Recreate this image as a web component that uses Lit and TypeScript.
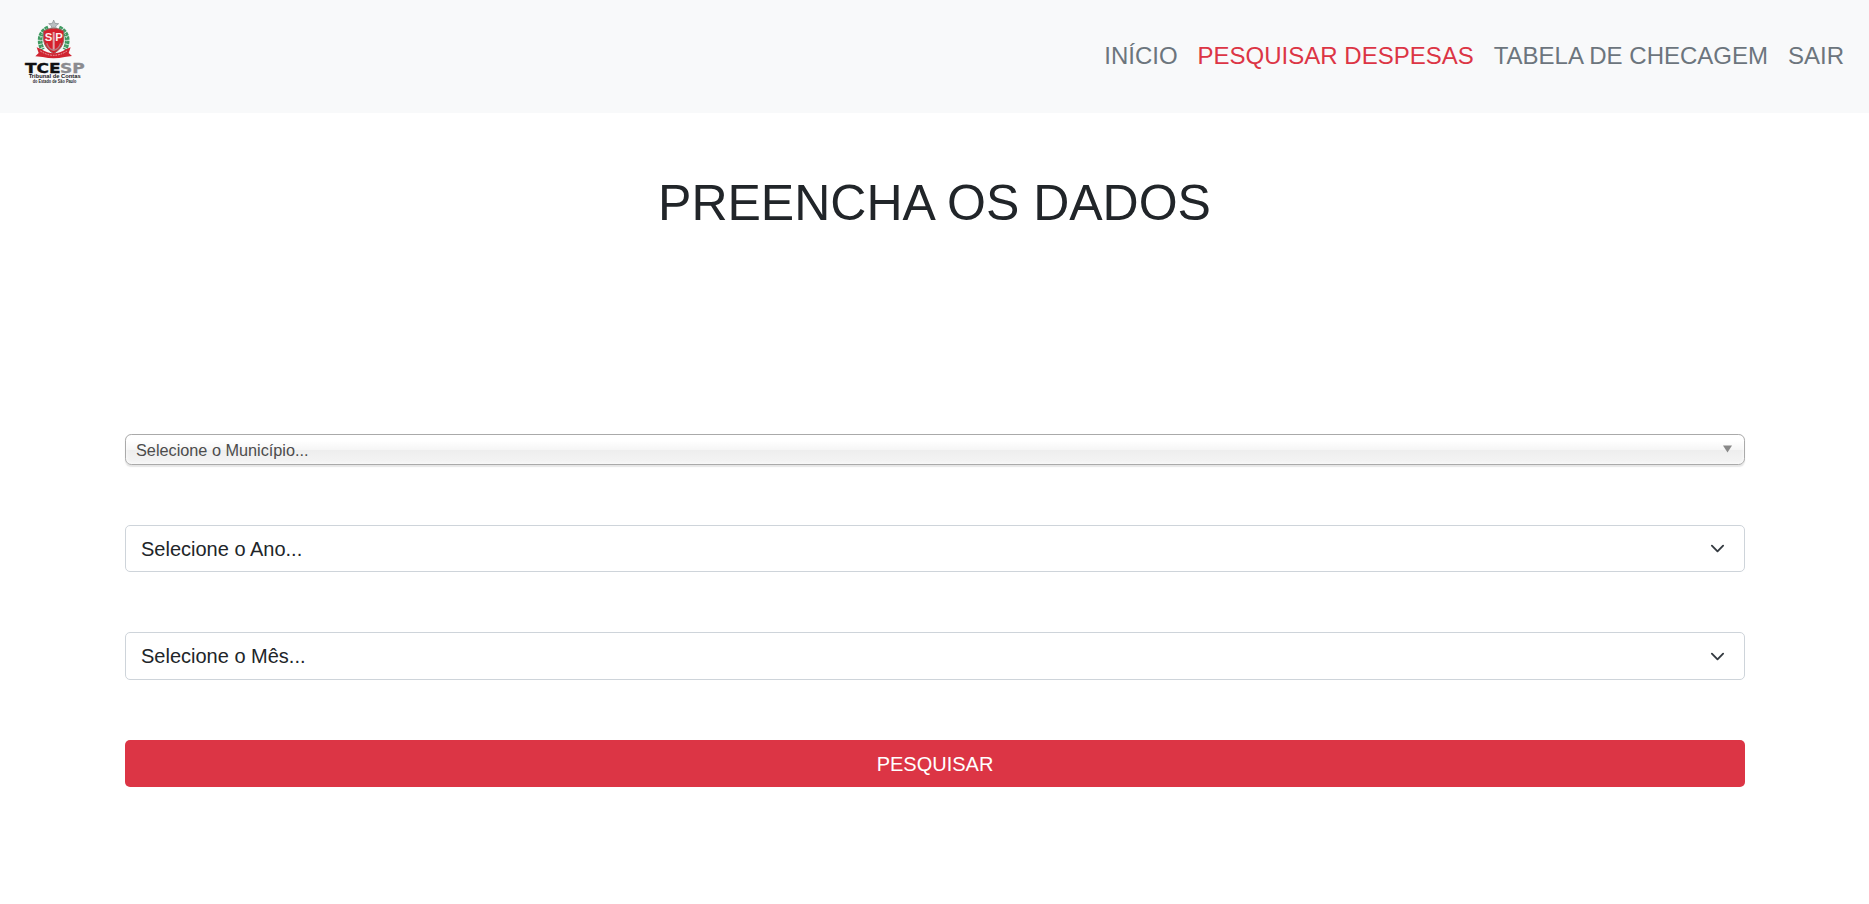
import { LitElement, html, css } from "lit";
import { customElement } from "lit/decorators.js";

@customElement("tce-logo")
class TceLogo extends LitElement {
  static styles = css`
    :host { display: block; }
    svg { display: block; }
    text { font-family: "Liberation Sans", Arial, sans-serif; font-weight: 700; }
    .wide { font-family: "DejaVu Sans", sans-serif; }
  `;
  render() {
    return html`<svg width="90" height="90" viewBox="0 0 270 270" role="img" aria-label="TCESP">
      <g fill="none" stroke="#3f9a61" stroke-width="14" stroke-dasharray="10 2">
        <path d="M115 54C89 64 84 94 98 119"/>
        <path d="M147 54C173 64 178 94 164 119"/>
      </g>
      <g fill="none" stroke="#b5d3bd" stroke-width="3" stroke-dasharray="4 6">
        <path d="M110 56C91 70 87 94 97 117"/>
        <path d="M152 56C171 70 175 94 165 117"/>
      </g>
      <path d="M131 30l4 10 11 1-9 7 3 10-9-6-9 6 3-10-9-7 11-1z" fill="#b9bfc1" stroke="#858b8e" stroke-width="2"/>
      <path d="M101 63Q131 46 161 63L161 91Q158 115 131 131Q104 115 101 91Z" fill="#d51f2b" stroke="#94625c" stroke-width="3"/>
      <path d="M131 66V122" stroke="#e0a5a8" stroke-width="6"/>
      <path d="M110 100Q118 121 131 120Q144 121 152 100" fill="none" stroke="#b77d80" stroke-width="4"/>
      <text x="104" y="92" font-size="34" fill="#fbeeee">S</text>
      <text x="136" y="92" font-size="34" fill="#fbeeee">P</text>
      <path d="M80 112L94 118Q131 142 168 118L182 112L176 129L186 138L164 141Q131 149 98 141L76 139L86 129Z" fill="#d02431"/>
      <path d="M91 123Q131 149 171 123" fill="none" stroke="#e9a5aa" stroke-width="3" stroke-dasharray="5 3"/>
      <text class="wide" x="45" y="189" font-size="43" fill="#101012" textLength="107" lengthAdjust="spacingAndGlyphs" stroke="#101012" stroke-width="1">TCE</text>
      <text class="wide" x="150" y="189" font-size="43" fill="#8b8b8f" textLength="74" lengthAdjust="spacingAndGlyphs" stroke="#8b8b8f" stroke-width="1">SP</text>
      <text x="56" y="205" font-size="18" fill="#17171a" textLength="156" lengthAdjust="spacingAndGlyphs">Tribunal de Contas</text>
      <text x="68" y="220" font-size="14" fill="#242428" textLength="131" lengthAdjust="spacingAndGlyphs">do Estado de São Paulo</text>
    </svg>`;
  }
}

@customElement("app-root")
class AppRoot extends LitElement {
  static styles = css`
    :host {
      display: block;
      height: 904px;
      overflow: hidden;
      background: #fff;
      color: #212529;
      font-family: "Liberation Sans", Arial, sans-serif;
      font-size: 20px;
      line-height: 1.5;
    }
    * { box-sizing: border-box; }
    nav {
      height: 113px;
      padding: 10px 25px 0 10px;
      display: flex;
      justify-content: space-between;
      align-items: flex-start;
      background: #f8f9fa;
    }
    .links { display: flex; gap: 20px; margin-top: 28px; font-size: 24px; line-height: 36px; }
    .links a { color: #6c757d; text-decoration: none; white-space: nowrap; }
    .links a.active { color: #dc3545; }
    h1 {
      margin: 60px 0 0;
      font-size: 50px;
      font-weight: 400;
      line-height: 60px;
      text-align: center;
    }
    form {
      margin: 200.7px 124px 0 125px;
      display: flex;
      flex-direction: column;
      gap: 60px;
    }
    .chosen {
      height: 31.25px;
      padding: 0 12px 0 10px;
      display: flex;
      align-items: center;
      justify-content: space-between;
      border: 1px solid #aaa;
      border-radius: 6.25px;
      background: linear-gradient(#fff 20%, #f6f6f6 50%, #eee 52%, #f4f4f4 100%);
      background-clip: padding-box;
      box-shadow: 0 0 3.75px #fff inset, 0 1.25px 1.25px rgba(0, 0, 0, 0.1);
      color: #4c4c4c;
      font-size: 16.25px;
    }
    .chosen span { padding-top: 2px; }
    .select {
      height: 47.5px;
      padding: 0 19px 0 15px;
      display: flex;
      align-items: center;
      justify-content: space-between;
      border: 1px solid #ced4da;
      border-radius: 5px;
    }
    button {
      height: 47.5px;
      padding: 0;
      border: 0;
      border-radius: 5px;
      background: #dc3545;
      color: #fff;
      font: inherit;
    }
    svg { display: block; }
  `;
  chevron() {
    return html`<svg width="15" height="15" viewBox="0 0 16 16"><path fill="none" stroke="#343a40" stroke-linecap="round" stroke-linejoin="round" stroke-width="2" d="m2 5 6 6 6-6"/></svg>`;
  }
  render() {
    return html`
      <nav>
        <tce-logo></tce-logo>
        <div class="links">
          <a>INÍCIO</a><a class="active">PESQUISAR DESPESAS</a><a>TABELA DE CHECAGEM</a><a>SAIR</a>
        </div>
      </nav>
      <h1>PREENCHA OS DADOS</h1>
      <form>
        <div class="chosen">
          <span>Selecione o Município...</span>
          <svg width="9" height="8" viewBox="0 0 9 8"><path d="M0 0.5H9L4.5 7.5Z" fill="#888"/></svg>
        </div>
        <div class="select"><span>Selecione o Ano...</span>${this.chevron()}</div>
        <div class="select"><span>Selecione o Mês...</span>${this.chevron()}</div>
        <button type="button">PESQUISAR</button>
      </form>`;
  }
}
